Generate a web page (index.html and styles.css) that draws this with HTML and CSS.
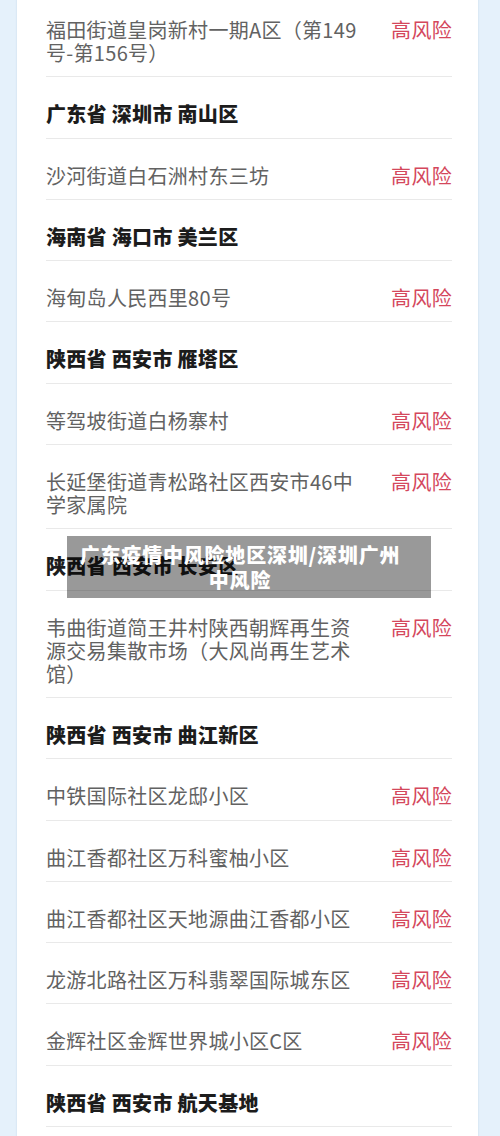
FILE: index.html
```html
<!DOCTYPE html>
<html lang="zh-CN">
<head>
<meta charset="utf-8">
<title>广东疫情中风险地区</title>
<link rel="stylesheet" href="styles.css">
</head>
<body>
<div class="page">
  <div class="card">
    <div class="row"><div class="addr">福田街道皇岗新村一期A区（第149号-第156号）</div><div class="risk">高风险</div></div>
    <div class="row head">广东省 深圳市 南山区</div>
    <div class="row"><div class="addr">沙河街道白石洲村东三坊</div><div class="risk">高风险</div></div>
    <div class="row head">海南省 海口市 美兰区</div>
    <div class="row"><div class="addr">海甸岛人民西里80号</div><div class="risk">高风险</div></div>
    <div class="row head">陕西省 西安市 雁塔区</div>
    <div class="row"><div class="addr">等驾坡街道白杨寨村</div><div class="risk">高风险</div></div>
    <div class="row"><div class="addr">长延堡街道青松路社区西安市46中学家属院</div><div class="risk">高风险</div></div>
    <div class="row head">陕西省 西安市 长安区</div>
    <div class="row"><div class="addr">韦曲街道简王井村陕西朝辉再生资源交易集散市场（大风尚再生艺术馆）</div><div class="risk">高风险</div></div>
    <div class="row head">陕西省 西安市 曲江新区</div>
    <div class="row"><div class="addr">中铁国际社区龙邸小区</div><div class="risk">高风险</div></div>
    <div class="row"><div class="addr">曲江香都社区万科蜜柚小区</div><div class="risk">高风险</div></div>
    <div class="row"><div class="addr">曲江香都社区天地源曲江香都小区</div><div class="risk">高风险</div></div>
    <div class="row"><div class="addr">龙游北路社区万科翡翠国际城东区</div><div class="risk">高风险</div></div>
    <div class="row"><div class="addr">金辉社区金辉世界城小区C区</div><div class="risk">高风险</div></div>
    <div class="row head">陕西省 西安市 航天基地</div>
  </div>
</div>
<div class="caption">广东疫情中风险地区深圳/深圳广州中风险</div>
</body>
</html>
```
FILE: styles.css
```css
html, body {
  margin: 0;
  padding: 0;
  height: 1136px;
  overflow: hidden;
}
body {
  background: #e5f1fb;
  font-family: "Noto Sans CJK SC", "Noto Sans", sans-serif;
  position: relative;
}
.page {
  padding: 0 22px 0 17px;
}
.card {
  background: #ffffff;
  margin-top: -7px;
  padding: 0 26px 40px 29px;
  box-shadow: 0 0 2px rgba(40, 90, 140, 0.15);
}
.row {
  display: flex;
  align-items: flex-start;
  padding: 25px 0 12.3px;
  border-bottom: 1px solid #e9e9e9;
  font-size: 20px;
  line-height: 23px;
}
.addr {
  width: 316px;
  color: #626262;
  letter-spacing: 0.3px;
}
.risk {
  margin-left: auto;
  color: #d4475c;
  letter-spacing: 0.3px;
}
.head {
  font-weight: 900;
  color: #1c1c1c;
  letter-spacing: 0.3px;
}
.caption {
  position: absolute;
  top: 536px;
  left: 67px;
  width: 324px;
  padding: 6px 29px 6px 11px;
  background: rgba(0, 0, 0, 0.4);
  color: #ffffff;
  font-weight: 900;
  font-size: 20px;
  line-height: 25px;
  letter-spacing: 0.8px;
  text-align: center;
}
```
